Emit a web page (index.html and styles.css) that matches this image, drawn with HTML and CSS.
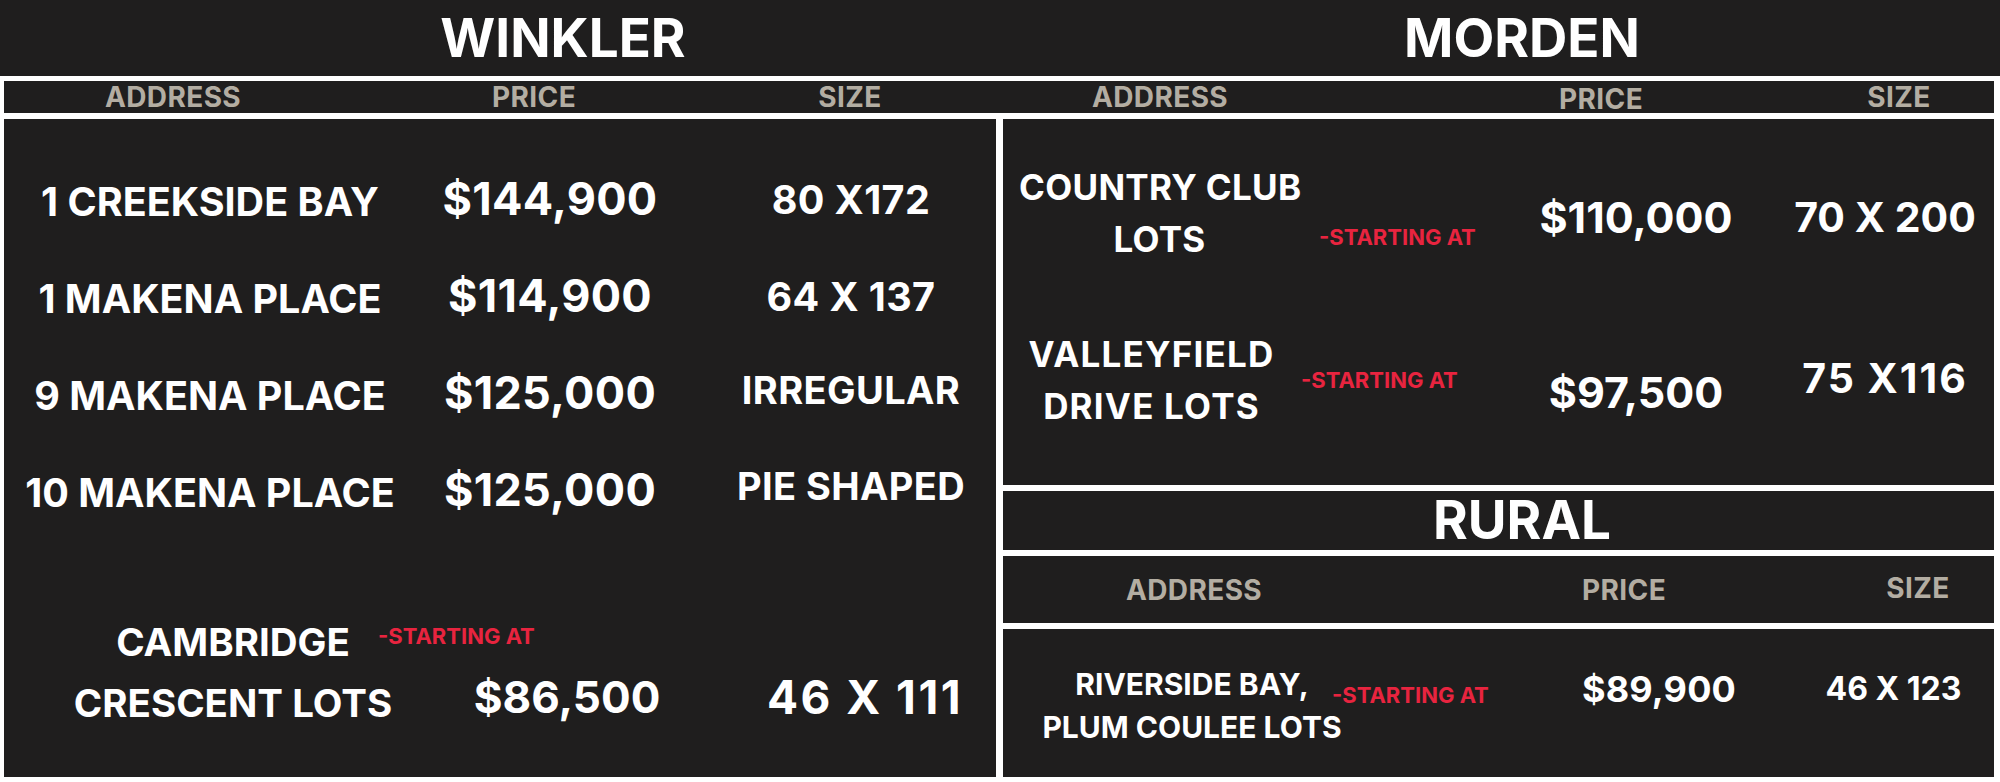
FILE: index.html
```html
<!DOCTYPE html>
<html>
<head>
<meta charset="utf-8">
<title>Lots</title>
<link rel="stylesheet" href="styles.css">
</head>
<body>
<div class="sheet">
  <header class="titles">
    <h1 class="title title-winkler">WINKLER</h1>
    <h1 class="title title-morden">MORDEN</h1>
  </header>

  <div class="colheads">
    <span>ADDRESS</span>
    <span>PRICE</span>
    <span>SIZE</span>
    <span>ADDRESS</span>
    <span class="h-mprice">PRICE</span>
    <span>SIZE</span>
  </div>

  <main class="content">
    <section class="panel winkler">
      <div class="w-addr">1 CREEKSIDE BAY</div>
      <div class="w-price">$144,900</div>
      <div class="w-size">80 X172</div>

      <div class="w-addr">1 MAKENA PLACE</div>
      <div class="w-price">$114,900</div>
      <div class="w-size">64 X 137</div>

      <div class="w-addr">9 MAKENA PLACE</div>
      <div class="w-price">$125,000</div>
      <div class="w-size w-size-word up4">IRREGULAR</div>

      <div class="w-addr">10 MAKENA PLACE</div>
      <div class="w-price">$125,000</div>
      <div class="w-size w-size-word up5">PIE SHAPED</div>

      <div class="w-camb w-camb-1">CAMBRIDGE</div>
      <div class="note w-note">-STARTING AT</div>
      <div class="w-camb w-camb-2">CRESCENT LOTS</div>
      <div class="w-price w-camb-price">$86,500</div>
      <div class="w-size w-camb-size">46 X 111</div>
    </section>

    <div class="right">
      <section class="panel morden">
        <div class="m-addr m-addr-1">COUNTRY CLUB<br>LOTS</div>
        <div class="note m-note-1">-STARTING AT</div>
        <div class="m-price m-price-1">$110,000</div>
        <div class="m-size m-size-1">70 X 200</div>

        <div class="m-addr m-addr-2">VALLEYFIELD<br>DRIVE LOTS</div>
        <div class="note m-note-2">-STARTING AT</div>
        <div class="m-price m-price-2">$97,500</div>
        <div class="m-size m-size-2">75 X116</div>
      </section>

      <div class="panel rural-title">RURAL</div>

      <div class="panel rural-heads">
        <span>ADDRESS</span>
        <span>PRICE</span>
        <span class="h-rsize">SIZE</span>
      </div>

      <section class="panel rural">
        <div class="r-addr">RIVERSIDE BAY,<br>PLUM COULEE LOTS</div>
        <div class="note r-note">-STARTING AT</div>
        <div class="r-price">$89,900</div>
        <div class="r-size">46 X 123</div>
      </section>
    </div>
  </main>
</div>
</body>
</html>
```

FILE: styles.css
```css
* { box-sizing: border-box; margin: 0; padding: 0; }

html, body { width: 2000px; height: 782px; overflow: hidden; }

body {
  background: #ffffff;
  font-family: Inter, "Noto Sans", sans-serif;
  font-weight: 700;
  color: #ffffff;
}

.sheet { display: flex; flex-direction: column; height: 782px; }

.panel { background: #1f1e1e; }

/* ---- big titles ---- */
.titles {
  height: 76px;
  background: #1f1e1e;
  display: grid;
  grid-template-columns: 1000px 1000px;
  align-items: center;
}
.title { font-size: 53px; font-weight: 700; line-height: 1; text-align: center; }
.title-winkler { padding-left: 126px; }
.title-morden { padding-left: 44px; }

/* ---- column headers ---- */
.colheads {
  margin: 5px 6px 0 4px;
  height: 32px;
  background: #1f1e1e;
  display: grid;
  grid-template-columns: 338px 384px 248px 372px 510px 86px;
  align-items: center;
  text-align: center;
  color: #b3ada2;
  font-size: 28px;
  letter-spacing: 0.4px;
  line-height: 1;
}
.h-mprice { padding-top: 4px; }

/* ---- content ---- */
.content {
  display: flex;
  gap: 7px;
  margin: 6px 6px 0 4px;
  height: 658px;
}

.note { color: #e8243f; font-size: 22px; line-height: 1; white-space: nowrap; }

/* Winkler */
.winkler {
  width: 992px;
  padding-top: 33px;
  display: grid;
  grid-template-columns: 374px 38px 268px 312px;
  grid-template-rows: repeat(4, 97px) 72px 61px 61px;
  align-items: center;
  text-align: center;
  line-height: 1;
  white-space: nowrap;
}
.w-addr { grid-column: 1 / 3; font-size: 39.5px; padding-top: 4px; }
.w-price { grid-column: 3; font-size: 45px; padding-bottom: 4px; letter-spacing: 0.3px; }
.w-size { grid-column: 4; font-size: 39.5px; padding-left: 22px; letter-spacing: 0.4px; }
.w-size-word { font-size: 38px; }
.up4 { padding-bottom: 9px; }
.up5 { padding-bottom: 11px; }

.w-camb { grid-column: 1 / 3; font-size: 38.5px; padding-left: 46px; }
.w-camb-1 { grid-row: 6; }
.w-camb-2 { grid-row: 7; }
.w-note { grid-row: 6; grid-column: 2 / 4; justify-self: start; padding-bottom: 14px; }
.w-camb-price { grid-row: 7; font-size: 44px; padding-left: 34px; padding-bottom: 14px; letter-spacing: 0; }
.w-camb-size { grid-row: 7; font-size: 46px; letter-spacing: 2.5px; padding-left: 50px; padding-bottom: 14px; }

/* Right column */
.right {
  width: 991px;
  display: flex;
  flex-direction: column;
  gap: 6px;
}

.morden {
  height: 366px;
  padding-top: 30px;
  display: grid;
  grid-template-columns: 297px 220px 232px 242px;
  grid-template-rows: 127px 207px;
  align-items: center;
  text-align: center;
  white-space: nowrap;
  line-height: 1;
}
.m-addr { font-size: 35px; line-height: 52px; letter-spacing: 0.3px; }
.m-addr-1 { padding-left: 16px; }
.m-addr-2 { letter-spacing: 1.2px; }
.m-note-1 { justify-self: start; padding-left: 19px; padding-top: 49px; }
.m-note-2 { justify-self: start; padding-left: 1px; }
.m-price { font-size: 43px; }
.m-price-1 { padding-top: 9px; }
.m-price-2 { padding-top: 25px; }
.m-size { font-size: 41px; padding-left: 24px; }
.m-size-1 { padding-top: 9px; }
.m-size-2 { padding-bottom: 3px; letter-spacing: 2px; }

.rural-title {
  height: 59px;
  display: flex;
  align-items: center;
  justify-content: center;
  padding-left: 47px;
  font-size: 53px;
  line-height: 1;
}

.rural-heads {
  height: 67px;
  display: grid;
  grid-template-columns: 382px 478px 110px;
  align-items: center;
  text-align: center;
  color: #b3ada2;
  font-size: 28px;
  letter-spacing: 0.4px;
  line-height: 1;
}
.h-rsize { padding-bottom: 3px; }

.rural {
  flex: 1;
  display: grid;
  grid-template-columns: 329px 49px 159px 238px 216px;
  align-items: center;
  text-align: center;
  white-space: nowrap;
  line-height: 1;
}
.r-addr { grid-column: 1 / 3; grid-row: 1; font-size: 30px; line-height: 43px; padding-top: 5px; }
.r-note { grid-column: 2 / 4; grid-row: 1; justify-self: start; padding-bottom: 16px; }
.r-price { grid-column: 4; grid-row: 1; font-size: 36px; padding-bottom: 28px; letter-spacing: 0.2px; }
.r-size { grid-column: 5; grid-row: 1; font-size: 32px; padding-left: 15px; padding-bottom: 28px; }
```
